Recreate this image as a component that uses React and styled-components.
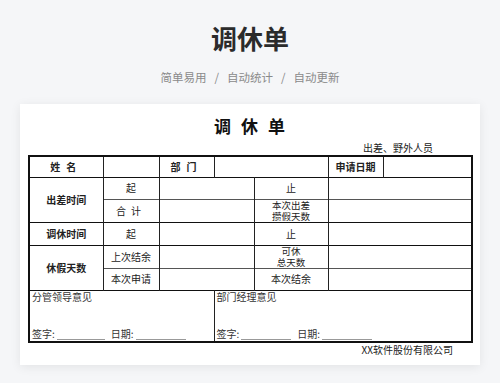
import React from "react";
import styled, { createGlobalStyle } from "styled-components";

const GlobalStyle = createGlobalStyle`
  html, body {
    margin: 0;
    padding: 0;
    background: #f5f6f8;
    font-family: "Noto Sans CJK SC", "Noto Sans", sans-serif;
  }
`;

const Page = styled.div`
  width: 500px;
  height: 383px;
  overflow: hidden;
  display: flex;
  flex-direction: column;
  align-items: center;
`;

const Heading = styled.h1`
  margin: 22px 0 0;
  font-size: 26px;
  line-height: 32px;
  font-weight: 700;
  color: #2b2b2b;
`;

const Tagline = styled.div`
  margin-top: 15px;
  font-size: 11.5px;
  line-height: 16px;
  color: #8a8a8a;
  display: flex;
  gap: 8px;
`;

const Card = styled.div`
  margin-top: 19px;
  width: 460px;
  box-sizing: border-box;
  background: #fff;
  box-shadow: 0 2px 10px rgba(0, 0, 0, 0.08);
  padding: 11px 9px 9px 8px;
  display: flex;
  flex-direction: column;
`;

const SheetTitle = styled.div`
  text-align: center;
  font-size: 17px;
  line-height: 22px;
  font-weight: 700;
  letter-spacing: 10px;
  color: #111;
  padding-left: 10px;
`;

const Note = styled.div`
  text-align: right;
  font-size: 10px;
  line-height: 14px;
  color: #222;
  padding-right: 38px;
  margin-top: 4px;
`;

const Sheet = styled.table`
  border-collapse: collapse;
  width: 443px;
  table-layout: fixed;
  border: 2px solid #111;
  font-size: 10px;
  color: #222;
`;

const Row = styled.tr`
  height: ${(p) => p.$h || 22}px;
  border-bottom: ${(p) => (p.$thin ? "1px solid #555" : "1.5px solid #111")};
`;

const Cell = styled.td`
  border-left: 1px solid #222;
  border-right: 1px solid #222;
  padding: 0;
  text-align: center;
  vertical-align: middle;
  font-weight: ${(p) => (p.$bold ? 700 : 400)};
  letter-spacing: ${(p) => p.$spaced || 0}px;
  line-height: 12px;
`;

const Stack = styled.span`
  display: flex;
  flex-direction: column;
  align-items: center;
  font-family: "Liberation Sans", "Noto Sans CJK SC", sans-serif;
  font-size: 9.5px;
  line-height: 11px;
`;

const Opinion = styled.td`
  border-left: 1px solid #222;
  padding: 0 2px;
  height: 50px;
  vertical-align: top;
`;

const OpinionBox = styled.div`
  height: 50px;
  display: flex;
  flex-direction: column;
  justify-content: space-between;
  font-size: 10px;
  line-height: 12px;
  color: #333;
`;

const SignLine = styled.div`
  display: flex;
  align-items: flex-end;
  padding-bottom: 1px;
`;

const Blank = styled.span`
  display: inline-block;
  width: ${(p) => p.$w || 50}px;
  border-bottom: 1px solid #999;
  margin: 0 6px 0 2px;
  height: 10px;
`;

const Company = styled.div`
  text-align: right;
  font-size: 10px;
  line-height: 12px;
  color: #222;
  padding-right: 18px;
  margin-top: 1px;
`;

export default function App() {
  return (
    <Page>
      <GlobalStyle />
      <Heading>调休单</Heading>
      <Tagline>
        <span>简单易用</span>
        <span>/</span>
        <span>自动统计</span>
        <span>/</span>
        <span>自动更新</span>
      </Tagline>
      <Card>
        <SheetTitle>调休单</SheetTitle>
        <Note>出差、野外人员</Note>
        <Sheet>
          <colgroup>
            <col style={{ width: 74 }} />
            <col style={{ width: 56 }} />
            <col style={{ width: 55 }} />
            <col style={{ width: 40 }} />
            <col style={{ width: 74 }} />
            <col style={{ width: 55 }} />
            <col style={{ width: 89 }} />
          </colgroup>
          <tbody>
            <Row $h={21}>
              <Cell $bold $spaced={6}>姓名</Cell>
              <Cell />
              <Cell $bold $spaced={6}>部门</Cell>
              <Cell colSpan={2} />
              <Cell $bold>申请日期</Cell>
              <Cell />
            </Row>
            <Row $thin>
              <Cell rowSpan={2} $bold>出差时间</Cell>
              <Cell>起</Cell>
              <Cell colSpan={2} />
              <Cell>止</Cell>
              <Cell colSpan={2} />
            </Row>
            <Row>
              <Cell $spaced={5}>合计</Cell>
              <Cell colSpan={2} />
              <Cell>
                <Stack><span>本次出差</span><span>攒假天数</span></Stack>
              </Cell>
              <Cell colSpan={2} />
            </Row>
            <Row $h={23}>
              <Cell $bold>调休时间</Cell>
              <Cell>起</Cell>
              <Cell colSpan={2} />
              <Cell>止</Cell>
              <Cell colSpan={2} />
            </Row>
            <Row $thin>
              <Cell rowSpan={2} $bold>休假天数</Cell>
              <Cell>上次结余</Cell>
              <Cell colSpan={2} />
              <Cell>
                <Stack><span>可休</span><span>总天数</span></Stack>
              </Cell>
              <Cell colSpan={2} />
            </Row>
            <Row>
              <Cell>本次申请</Cell>
              <Cell colSpan={2} />
              <Cell>本次结余</Cell>
              <Cell colSpan={2} />
            </Row>
            <tr>
              <Opinion colSpan={3}>
                <OpinionBox>
                  <span>分管领导意见</span>
                  <SignLine>
                    签字:<Blank $w={48} />日期:<Blank $w={50} />
                  </SignLine>
                </OpinionBox>
              </Opinion>
              <Opinion colSpan={4}>
                <OpinionBox>
                  <span>部门经理意见</span>
                  <SignLine>
                    签字:<Blank $w={50} />日期:<Blank $w={50} />
                  </SignLine>
                </OpinionBox>
              </Opinion>
            </tr>
          </tbody>
        </Sheet>
        <Company>XX软件股份有限公司</Company>
      </Card>
    </Page>
  );
}
